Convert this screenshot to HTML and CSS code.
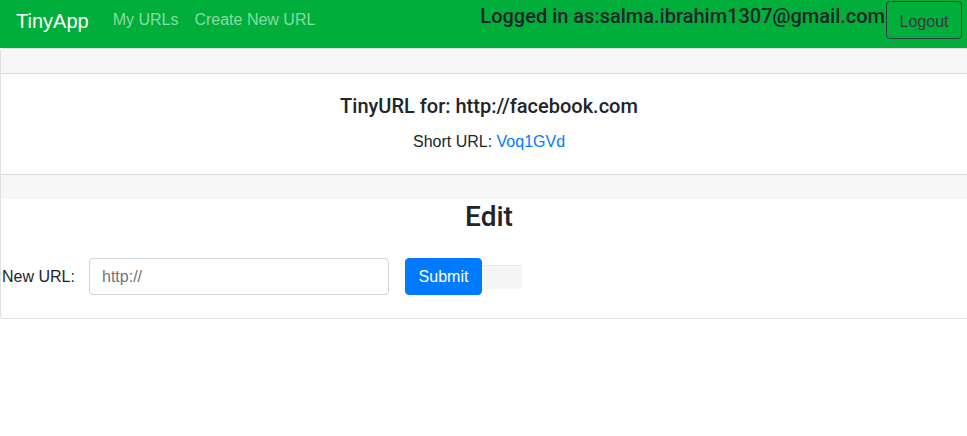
FILE: index.html
```html
<!DOCTYPE html>
<html>
<head>
<meta charset="utf-8">
<link rel="stylesheet" href="styles.css">
</head>
<body>
<nav class="navbar">
  <a class="brand" href="#">TinyApp</a>
  <a class="nav-link" href="#">My URLs</a>
  <a class="nav-link" href="#">Create New URL</a>
  <div class="spacer"></div>
  <h5 class="logged">Logged in as:salma.ibrahim1307@gmail.com</h5>
  <button class="btn-logout">Logout</button>
</nav>
<div class="card">
  <div class="card-header"></div>
  <div class="card-body">
    <h5 class="card-title">TinyURL for: http://facebook.com</h5>
    <p class="card-text">Short URL: <a href="#">Voq1GVd</a></p>
  </div>
  <div class="card-footer"></div>
  <div class="edit">
    <h3 class="edit-title">Edit</h3>
    <form class="edit-form">
      <label class="label">New URL:</label>
      <input class="input" type="text" placeholder="http://">
      <button class="btn-submit" type="button">Submit</button>
      <span class="extra"></span>
    </form>
  </div>
</div>
</body>
</html>
```
FILE: styles.css
```css
html, body {
  margin: 0;
  padding: 0;
  overflow: hidden;
  background: #fff;
  font-family: "Liberation Sans", Arial, sans-serif;
  color: #212529;
  font-size: 16px;
  line-height: 1.5;
}
.navbar {
  display: flex;
  align-items: flex-start;
  height: 48px;
  background: #00ae3b;
  padding: 0 0 0 16px;
  box-sizing: border-box;
  width: 967px;
}
.brand {
  color: #fff;
  font-size: 20px;
  text-decoration: none;
  margin-top: 6px;
  line-height: 30px;
  margin-right: 16px;
}
.nav-link {
  color: rgba(255,255,255,0.55);
  text-decoration: none;
  padding: 0 8px;
  margin-top: 8px;
  line-height: 24px;
}
.spacer { flex: 1; }
.logged {
  margin: 4px 1px 0 0;
  font-family: Roboto, "Liberation Sans", sans-serif;
  font-size: 20px;
  font-weight: 500;
  line-height: 24px;
  color: #212529;
  white-space: nowrap;
}
.btn-logout {
  margin: 1px 5px 0 0;
  height: 38px;
  width: 76px;
  padding: 4px 0 0;
  background: transparent;
  border: 1px solid #343a40;
  border-radius: 4px;
  color: #343a40;
  font-family: inherit;
  font-size: 16px;
  line-height: 24px;
}
.card {
  width: 978px;
  border: 1px solid rgba(0,0,0,0.125);
  border-radius: 4px;
  box-sizing: border-box;
  background: #fff;
}
.card-header {
  height: 24px;
  background: #f7f7f7;
  border-bottom: 1px solid rgba(0,0,0,0.125);
}
.card-body {
  padding: 20px;
  text-align: center;
}
.card-title {
  margin: 0 0 12px;
  font-family: Roboto, "Liberation Sans", sans-serif;
  font-size: 20px;
  font-weight: 500;
  line-height: 24px;
}
.card-text {
  margin: 0;
}
.card-text a {
  color: #007bff;
  text-decoration: none;
}
.card-footer {
  height: 24px;
  background: #f7f7f7;
  border-top: 1px solid rgba(0,0,0,0.125);
}
.edit {
  padding-bottom: 23px;
}
.edit-title {
  text-align: center;
  font-family: Roboto, "Liberation Sans", sans-serif;
  font-size: 28px;
  font-weight: 500;
  line-height: 34px;
  margin: 1px 0 24px;
}
.edit-form {
  display: flex;
  align-items: center;
}
.label {
  margin-left: 1px;
  width: 87px;
}
.input {
  width: 300px;
  height: 37px;
  box-sizing: border-box;
  border: 1px solid #ced4da;
  border-radius: 4px;
  padding: 6px 12px;
  font-family: inherit;
  font-size: 16px;
  color: #495057;
}
.input::placeholder { color: #6c757d; }
.btn-submit {
  margin-left: 16px;
  width: 77px;
  height: 37px;
  background: #007bff;
  color: #fff;
  border: 1px solid #007bff;
  border-radius: 4px;
  font-family: inherit;
  font-size: 16px;
}
.extra {
  width: 40px;
  height: 24px;
  background: #f5f5f5;
  border-top: 1px solid #e6e6e6;
  box-sizing: border-box;
}
```
